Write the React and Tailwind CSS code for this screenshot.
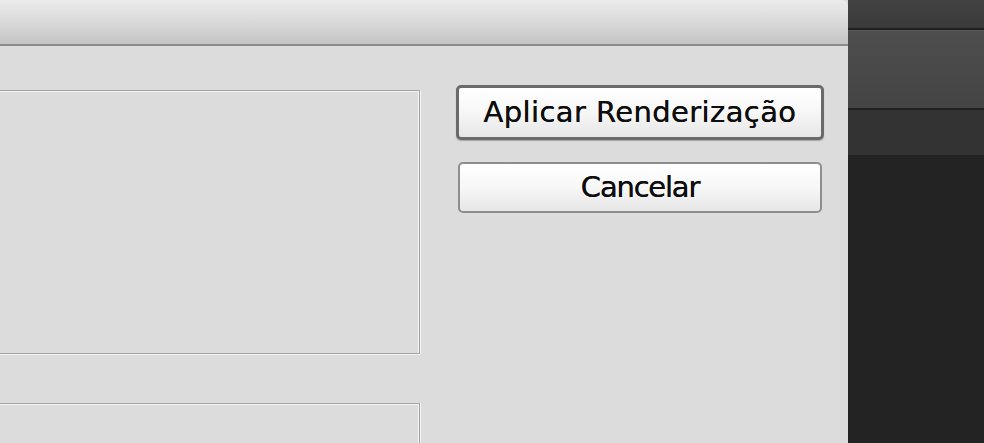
import React from "react";

/* etched group box, left edge runs off the dialog */
function GroupBox({ className = "" }) {
  return (
    <div className={"shrink-0 border-t border-r border-b border-[#a2a2a2] shadow-[0_1px_0_#f4f4f4,1px_0_0_#f4f4f4,inset_0_1px_0_#f4f4f4,inset_-1px_0_0_#f4f4f4] " + className} />
  );
}

export default function App() {
  return (
    <div className="flex h-[443px] w-[984px] overflow-hidden bg-[#222] font-['DejaVu_Sans',sans-serif]">
      {/* dialog */}
      <div className="flex w-[848px] shrink-0 flex-col bg-[#dcdcdc] shadow-[1px_0_2px_rgba(0,0,0,0.6)]">
        <div className="h-[46px] shrink-0 rounded-tr-[7px] border-b-2 border-[#8c8c8c] bg-gradient-to-b from-[#ebebeb] via-[#dadada] to-[#c4c4c4]" />
        <div className="flex min-h-0 flex-1">
          <div className="flex w-[420px] flex-col pt-[44px]">
            <GroupBox className="h-[264px]" />
            <GroupBox className="mt-[49px] h-[60px]" />
          </div>
          <div className="ml-[36px] flex flex-col pt-[39px]">
            <button className="h-[55px] w-[368px] rounded-[5px] border-[3px] border-[#6a6a6a] bg-gradient-to-b from-white via-[#f7f7f7] to-[#e6e6e6] pt-[1px] text-[29px] tracking-[0.4px] text-[#0e0e0e] shadow-[0_1px_1px_rgba(0,0,0,0.25)] [text-shadow:0_0_0.6px_#000]">
              Aplicar Renderização
            </button>
            <button className="ml-[2px] mt-[22px] h-[51px] w-[364px] rounded-[5px] border-2 border-[#8e8e8e] bg-gradient-to-b from-white via-[#f7f7f7] to-[#e6e6e6] pt-[1px] text-[29px] tracking-[-1.2px] text-[#0e0e0e] [text-shadow:0_0_0.6px_#000]">
              Cancelar
            </button>
          </div>
        </div>
      </div>
      {/* dark app window behind */}
      <div className="flex flex-1 flex-col">
        <div className="h-[28px] bg-gradient-to-b from-[#434343] to-[#3a3a3a]" />
        <div className="h-[2px] bg-[#1f1f1f]" />
        <div className="h-[78px] border-t border-[#5a5a5a] bg-gradient-to-b from-[#4e4e4e] to-[#444]" />
        <div className="h-[2px] bg-[#1f1f1f]" />
        <div className="h-[45px] bg-[#333]" />
        <div className="flex-1 bg-[#232323]" />
      </div>
    </div>
  );
}
